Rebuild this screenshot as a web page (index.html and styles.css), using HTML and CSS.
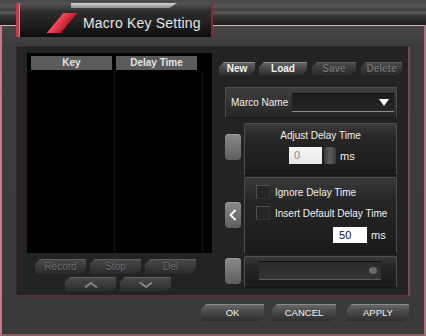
FILE: index.html
```html
<!DOCTYPE html>
<html lang="en">
<head>
    <meta charset="UTF-8">
    <title>Macro Key Setting</title>
    <link rel="stylesheet" href="styles.css">
</head>
<body>
    <div class="app">
        <div class="titlebar">
            <div class="tab">
                <span class="slash"></span>
                <span class="title">Macro Key Setting</span>
            </div>
        </div>

        <div class="frame">
            <div class="inner">
                <div class="left">
                    <div class="list">
                        <div class="list-head">
                            <div class="col-head">Key</div>
                            <div class="col-head">Delay Time</div>
                        </div>
                        <div class="list-body">
                            <div class="col-body"></div>
                            <div class="col-body"></div>
                        </div>
                    </div>
                    <div class="btn-row">
                        <button class="cut-btn off">Record</button>
                        <button class="cut-btn off">Stop</button>
                        <button class="cut-btn off">Del</button>
                    </div>
                    <div class="btn-row arrows">
                        <button class="cut-btn off">
                            <svg width="14" height="6" viewBox="0 0 14 6"><path d="M1 5.5 L7 1 L13 5.5" fill="none" stroke="#848484" stroke-width="2"/></svg>
                        </button>
                        <button class="cut-btn off">
                            <svg width="14" height="6" viewBox="0 0 14 6"><path d="M1 0.5 L7 5 L13 0.5" fill="none" stroke="#848484" stroke-width="2"/></svg>
                        </button>
                    </div>
                </div>

                <div class="right">
                    <div class="tabs">
                        <button class="cut-btn tab-btn w-new">New</button>
                        <button class="cut-btn tab-btn w-load">Load</button>
                        <button class="cut-btn tab-btn off w-save">Save</button>
                        <button class="cut-btn tab-btn off w-del">Delete</button>
                    </div>

                    <div class="name-box">
                        <span class="label">Marco Name</span>
                        <div class="select">
                            <svg width="10" height="7" viewBox="0 0 10 7"><path d="M0 0 H10 L5 7 Z" fill="#fff"/></svg>
                        </div>
                    </div>

                    <div class="group">
                        <div class="side-btn"></div>
                        <div class="panel p-adjust">
                            <div class="panel-title">Adjust Delay Time</div>
                            <div class="field-row">
                                <div class="num gray">0</div>
                                <div class="spin"></div>
                                <span class="unit">ms</span>
                            </div>
                        </div>
                    </div>

                    <div class="group">
                        <div class="side-btn">
                            <svg width="8" height="12" viewBox="0 0 8 12"><path d="M6.5 1 L1.5 6 L6.5 11" fill="none" stroke="#fff" stroke-width="1.8"/></svg>
                        </div>
                        <div class="panel p-options">
                            <label class="check"><span class="box"></span>Ignore Delay Time</label>
                            <label class="check"><span class="box"></span>Insert Default Delay Time</label>
                            <div class="field-row end">
                                <div class="num wide">50</div>
                                <span class="unit">ms</span>
                            </div>
                        </div>
                    </div>

                    <div class="group">
                        <div class="side-btn"></div>
                        <div class="panel p-drop">
                            <div class="select dim">
                                <span class="dot"></span>
                            </div>
                        </div>
                    </div>
                </div>
            </div>

            <div class="footer">
                <button class="cut-btn foot w-ok">OK</button>
                <button class="cut-btn foot w-cancel">CANCEL</button>
                <button class="cut-btn foot w-apply">APPLY</button>
            </div>
        </div>
    </div>
</body>
</html>
```

FILE: styles.css
```css
body {
    margin: 0;
    background: #2b2b2b;
    font-family: "Liberation Sans", Arial, sans-serif;
    font-size: 10px;
    color: #eee;
}
.app {
    width: 426px;
    height: 336px;
    overflow: hidden;
}
.titlebar {
    height: 25px;
    background: linear-gradient(to bottom, #474747 0, #575757 25%, #3e3e3e 40%, #5a5a5a 50%, #3a3a3a 62%, #2a2a2a 82%, #1c1c1c 100%);
    position: relative;
    z-index: 2;
}
.tab {
    position: relative;
    top: 3px;
    margin-left: 16px;
    width: 197px;
    height: 34px;
    box-sizing: border-box;
    display: flex;
    align-items: center;
    background: linear-gradient(to bottom, #555 0, #2e2e2e 25%, #1b1b1b 70%, #0d0d0d 100%);
    border-left: 3px solid #c43a4c;
    border-right: 2px solid #8a2534;
    box-shadow: inset 1px 0 0 #e08090;
}
.tab::before {
    content: "";
    position: absolute;
    left: 52px;
    top: 0;
    width: 106px;
    height: 5px;
    background: linear-gradient(to bottom, #d6d6d6, #8a8a8a);
    clip-path: polygon(0 0, 100% 0, 93% 100%, 0 100%);
}
.slash {
    width: 14px;
    height: 20px;
    margin-left: 36px;
    margin-top: 6px;
    background: linear-gradient(to right, #ff4a5a, #b8202e);
    transform: skewX(-40deg);
}
.title {
    margin-left: 14px;
    margin-top: 6px;
    font-size: 14px;
    color: #e6e6e6;
    letter-spacing: 0.2px;
}

.frame {
    height: 311px;
    box-sizing: border-box;
    background: linear-gradient(to bottom, #474747 0, #3c3c3c 20px, #3a3a3a 100%);
    border-top: 1px solid #d9b4b6;
    border-left: 2px solid #c87a84;
    border-right: 2px solid #b2707a;
    border-bottom: 2px solid #8a5a60;
    padding: 20px 0 0 14px;
}
.inner {
    width: 394px;
    height: 251px;
    box-sizing: border-box;
    background: #232323;
    border: 1px solid #3a2a2c;
    border-right: 2px solid #7a4850;
    border-bottom: 2px solid #5a3036;
    padding: 6px 0 0 10px;
    display: flex;
    gap: 7px;
}
.left {
    width: 186px;
}
.list {
    height: 200px;
    background: #000;
    display: flex;
    flex-direction: column;
}
.list-head {
    display: flex;
    gap: 4px;
    padding: 3px 0 0 4px;
}
.col-head {
    width: 81px;
    height: 14px;
    line-height: 14px;
    background: #5b5b5b;
    text-align: center;
    font-weight: bold;
    color: #e4e4e4;
}
.list-body {
    flex: 1;
    display: flex;
}
.col-body {
    width: 87px;
    border-right: 1px solid #141414;
}

.cut-btn {
    font-family: "Liberation Sans", Arial, sans-serif;
    font-size: 10px;
    border: none;
    padding: 0;
    color: #f2f2f2;
    background: linear-gradient(to bottom, #6a6a6a 0, #4a4a4a 45%, #2e2e2e 100%);
    box-shadow: inset 0 1px 0 #8a8a8a;
    clip-path: polygon(5px 0, 100% 0, 100% calc(100% - 5px), calc(100% - 5px) 100%, 0 100%, 0 5px);
    display: flex;
    align-items: center;
    justify-content: center;
}
.cut-btn.off {
    color: #6e6e6e;
    background: linear-gradient(to bottom, #4a4a4a 0, #3a3a3a 50%, #2a2a2a 100%);
    box-shadow: inset 0 1px 0 #5e5e5e;
    text-shadow: 0 1px 0 #222;
}
.btn-row {
    display: flex;
    gap: 4px;
    margin: 6px 0 0 8px;
}
.btn-row .cut-btn {
    width: 51px;
    height: 15px;
}
.btn-row.arrows {
    margin: 3px 0 0 38px;
}

.right {
    width: 190px;
    padding-top: 9px;
}
.tabs {
    display: flex;
    gap: 4px;
}
.tab-btn {
    height: 13px;
    font-weight: bold;
}
.w-new { width: 36px; }
.w-load { width: 48px; }
.w-save { width: 44px; margin-left: 1px; }
.w-del { width: 41px; margin-left: 1px; }

.name-box {
    margin: 12px 0 0 6px;
    width: 172px;
    height: 31px;
    box-sizing: border-box;
    background: linear-gradient(to bottom, #3e3e3e, #262626);
    border: 1px solid #4c4c4c;
    border-bottom-color: #1a1a1a;
    display: flex;
    align-items: center;
    padding-left: 5px;
}
.label {
    color: #f0f0f0;
}
.select {
    margin-left: 4px;
    width: 102px;
    height: 19px;
    box-sizing: border-box;
    background: linear-gradient(to bottom, #1c1c1c, #262626);
    border-bottom: 1px solid #8c8c8c;
    box-shadow: inset 0 1px 0 #111;
    display: flex;
    align-items: center;
    justify-content: flex-end;
    padding-right: 5px;
}

.group {
    display: flex;
    align-items: center;
    gap: 3px;
    margin-left: 6px;
}
.side-btn {
    width: 16px;
    height: 26px;
    border-radius: 4px;
    background: linear-gradient(to bottom, #8a8a8a, #5e5e5e);
    box-shadow: inset 0 1px 0 #9a9a9a;
    display: flex;
    align-items: center;
    justify-content: center;
}
.panel {
    width: 153px;
    box-sizing: border-box;
    background: linear-gradient(to bottom, #3a3a3a 0, #262626 30%, #1a1a1a 100%);
    border: 1px solid #4e4e4e;
    border-bottom-color: #141414;
    border-radius: 2px;
}
.p-adjust {
    height: 53px;
    margin-top: 5px;
    padding-top: 6px;
}
.panel-title {
    text-align: center;
    color: #f0f0f0;
}
.field-row {
    display: flex;
    align-items: center;
    margin: 6px 0 0 44px;
}
.num {
    width: 33px;
    height: 17px;
    box-sizing: border-box;
    background: #fff;
    color: #111;
    padding-left: 5px;
    line-height: 17px;
    font-size: 11px;
}
.num.gray {
    color: #8a8a8a;
    background: linear-gradient(to bottom, #f8f8f8, #e6e6e6);
}
.spin {
    width: 12px;
    height: 17px;
    margin-left: 2px;
    border-radius: 3px;
    background: linear-gradient(to right, #3c3c3c, #5c5c5c, #3c3c3c);
}
.unit {
    margin-left: 4px;
    font-size: 11px;
    color: #f0f0f0;
}
.p-options {
    height: 77px;
    margin-top: 1px;
    padding: 7px 0 0 11px;
}
.check {
    display: flex;
    align-items: center;
    gap: 5px;
    height: 14px;
    margin-bottom: 7px;
    color: #f0f0f0;
}
.box {
    width: 14px;
    height: 14px;
    box-sizing: border-box;
    background: #262626;
    border: 1px solid #505050;
    border-right-color: #333;
    border-bottom-color: #333;
}
.field-row.end {
    margin: 0 0 0 77px;
}
.num.wide {
    width: 34px;
    height: 16px;
    line-height: 16px;
    padding-left: 6px;
}
.p-drop {
    height: 32px;
    margin-top: 2px;
    padding: 4px 0 0 14px;
}
.select.dim {
    margin: 0;
    width: 122px;
    background: linear-gradient(to bottom, #2a2a2a, #343434);
    border-bottom-color: #5a5a5a;
    padding-right: 4px;
}
.dot {
    width: 8px;
    height: 7px;
    border-radius: 50%;
    background: #6a6a6a;
}

.footer {
    display: flex;
    gap: 8px;
    margin: 7px 0 0 185px;
}
.foot {
    height: 17px;
    font-size: 9.5px;
}
.w-ok { width: 63px; }
.w-cancel { width: 64px; }
.w-apply { width: 62px; margin-left: 3px; }
```
